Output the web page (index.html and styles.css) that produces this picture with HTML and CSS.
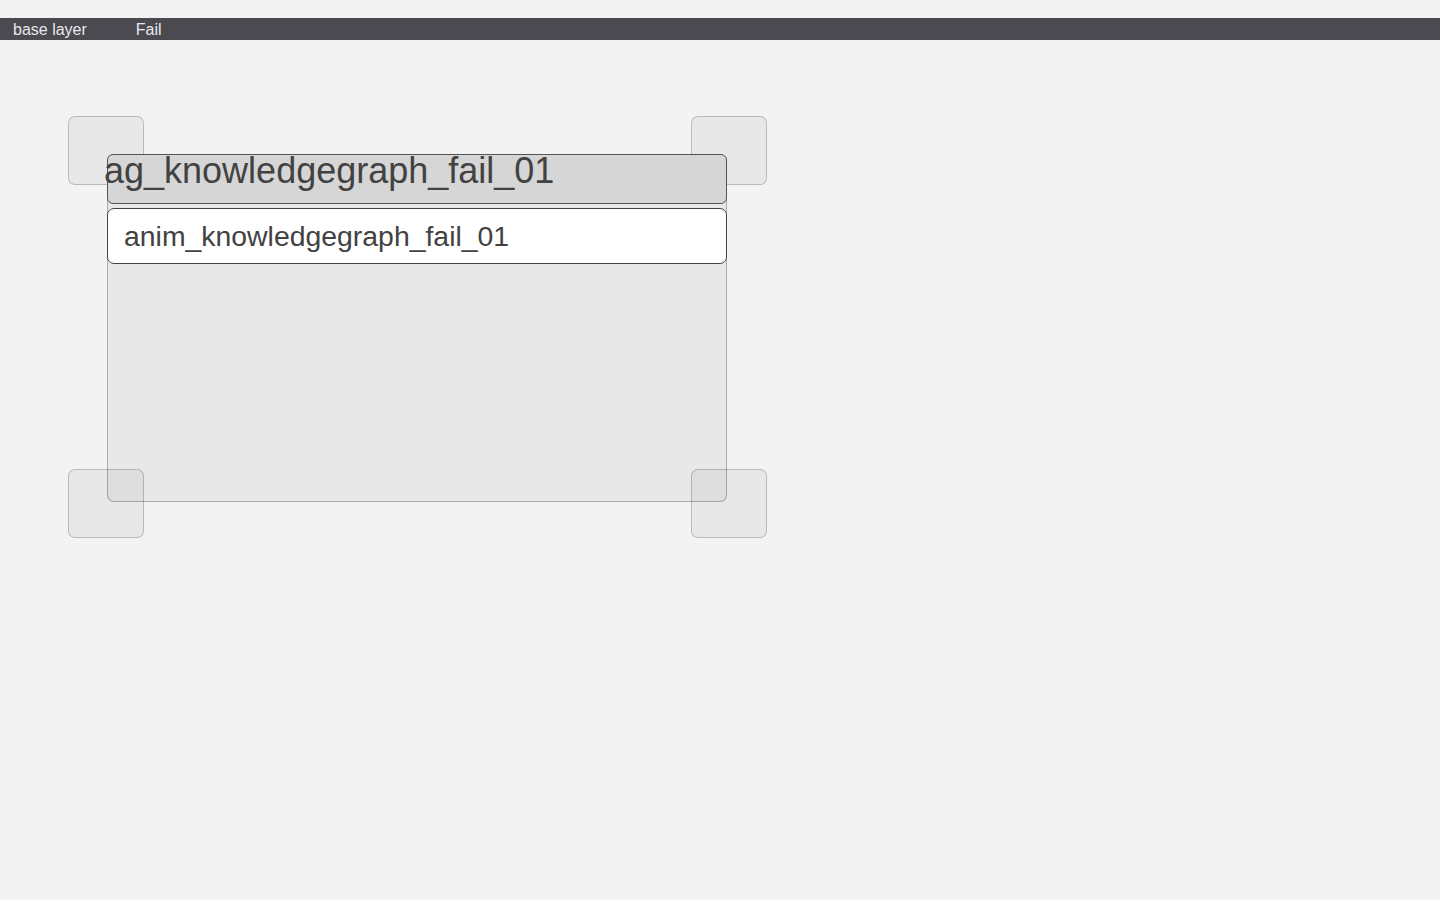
FILE: index.html
```html
<!DOCTYPE html>
<html lang="en">
<head>
<meta charset="utf-8">
<title>base layer - Fail</title>
<link rel="stylesheet" href="styles.css">
</head>
<body>
  <div class="top-space"></div>
  <nav class="layer-bar">
    <span class="layer-item first">base layer</span>
    <span class="layer-item">Fail</span>
  </nav>
  <main class="stage">
    <section class="panel">
      <div class="handle tl"></div>
      <div class="handle tr"></div>
      <div class="handle bl"></div>
      <div class="handle br"></div>
      <header class="panel-header"><span class="panel-title">ag_knowledgegraph_fail_01</span></header>
      <input class="panel-input" type="text" value="anim_knowledgegraph_fail_01">
      <div class="panel-body"></div>
    </section>
  </main>
</body>
</html>
```

FILE: styles.css
```css
html, body {
  margin: 0;
  padding: 0;
  background: #f3f3f3;
  font-family: "Liberation Sans", Arial, sans-serif;
}

body {
  min-height: 100vh;
}

.top-space {
  height: 18px;
}

.layer-bar {
  display: flex;
  gap: 49px;
  height: 22px;
  box-sizing: border-box;
  padding: 2px 0 0 13px;
  background: #4b4a50;
  color: #e8e8ea;
  font-size: 16px;
  line-height: 19px;
}

.stage {
  padding: 114px 0 120px 107px;
}

.panel {
  position: relative;
  width: 620px;
  height: 348px;
  box-sizing: border-box;
  display: flex;
  flex-direction: column;
  gap: 4px;
  background: #e8e8e8;
  border: 1px solid #ababab;
  border-top: none;
  border-radius: 7px;
}

.panel-header {
  position: relative;
  z-index: 2;
  margin: 0 -1px;
  height: 50px;
  box-sizing: border-box;
  background: #d6d6d6;
  border: 1px solid #555;
  border-radius: 6px;
  font-size: 36px;
  line-height: 32px;
  color: #424242;
  white-space: nowrap;
}

.panel-title {
  display: block;
  margin-left: -4px;
}

.panel-input {
  position: relative;
  z-index: 2;
  margin: 0 -1px;
  height: 56px;
  box-sizing: border-box;
  padding: 1px 15px 0 16px;
  background: #fff;
  border: 1px solid #444;
  border-radius: 7px;
  font-family: "Liberation Sans", Arial, sans-serif;
  font-size: 28.4px;
  color: #424242;
  outline: none;
}

.panel-body {
  flex: 1;
}

.handle {
  position: absolute;
  z-index: 1;
  width: 76px;
  height: 69px;
  box-sizing: border-box;
  background: rgba(0, 0, 0, 0.045);
  border: 1px solid rgba(0, 0, 0, 0.2);
  border-radius: 7px;
}

.handle.tl { left: -40px; top: -38px; }
.handle.tr { right: -41px; top: -38px; }
.handle.bl { left: -40px; bottom: -37px; }
.handle.br { right: -41px; bottom: -37px; }
```
